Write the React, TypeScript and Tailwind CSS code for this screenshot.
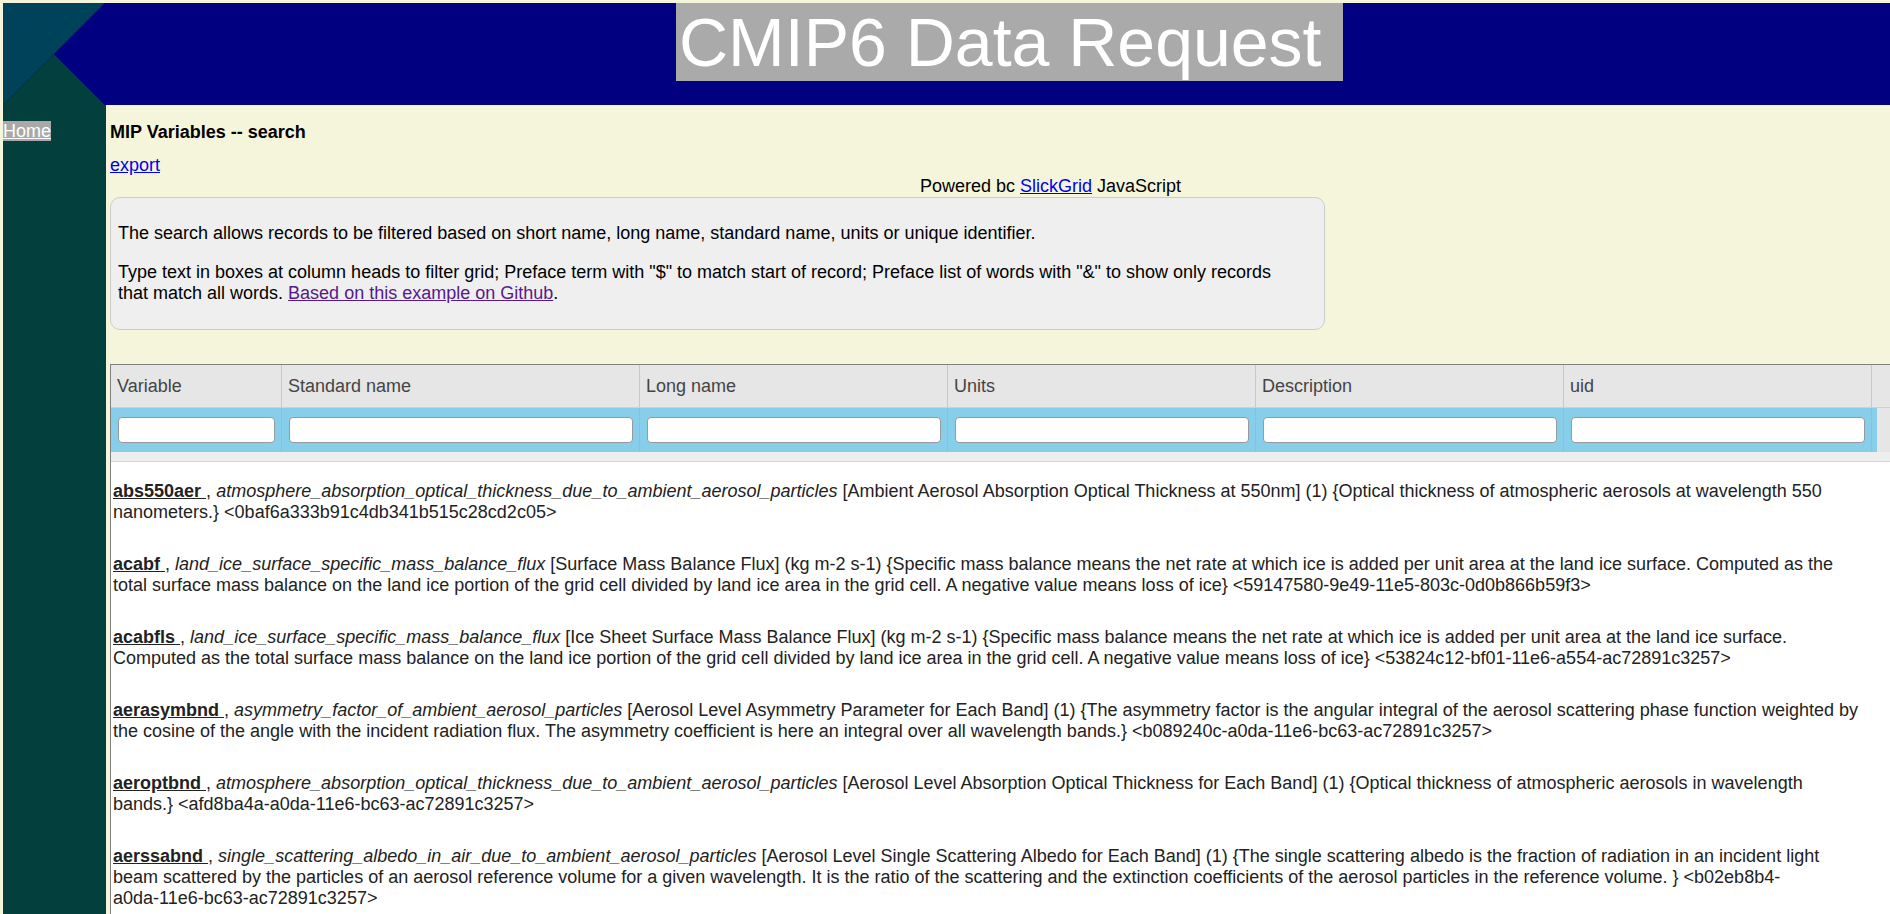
import React from "react";

const columns = [
  { label: "Variable", w: "w-[171px]" },
  { label: "Standard name", w: "w-[358px]" },
  { label: "Long name", w: "w-[308px]" },
  { label: "Units", w: "w-[308px]" },
  { label: "Description", w: "w-[308px]" },
  { label: "uid", w: "w-[308px]" },
];

type Row = {
  name: string;
  std: string;
  long: string;
  units: string;
  desc: string;
  uid: string;
};

const rows: Row[] = [
  {
    name: "abs550aer",
    std: "atmosphere_absorption_optical_thickness_due_to_ambient_aerosol_particles",
    long: "Ambient Aerosol Absorption Optical Thickness at 550nm",
    units: "1",
    desc: "Optical thickness of atmospheric aerosols at wavelength 550 nanometers.",
    uid: "0baf6a333b91c4db341b515c28cd2c05",
  },
  {
    name: "acabf",
    std: "land_ice_surface_specific_mass_balance_flux",
    long: "Surface Mass Balance Flux",
    units: "kg m-2 s-1",
    desc: "Specific mass balance means the net rate at which ice is added per unit area at the land ice surface. Computed as the total surface mass balance on the land ice portion of the grid cell divided by land ice area in the grid cell. A negative value means loss of ice",
    uid: "59147580-9e49-11e5-803c-0d0b866b59f3",
  },
  {
    name: "acabfls",
    std: "land_ice_surface_specific_mass_balance_flux",
    long: "Ice Sheet Surface Mass Balance Flux",
    units: "kg m-2 s-1",
    desc: "Specific mass balance means the net rate at which ice is added per unit area at the land ice surface. Computed as the total surface mass balance on the land ice portion of the grid cell divided by land ice area in the grid cell. A negative value means loss of ice",
    uid: "53824c12-bf01-11e6-a554-ac72891c3257",
  },
  {
    name: "aerasymbnd",
    std: "asymmetry_factor_of_ambient_aerosol_particles",
    long: "Aerosol Level Asymmetry Parameter for Each Band",
    units: "1",
    desc: "The asymmetry factor is the angular integral of the aerosol scattering phase function weighted by the cosine of the angle with the incident radiation flux. The asymmetry coefficient is here an integral over all wavelength bands.",
    uid: "b089240c-a0da-11e6-bc63-ac72891c3257",
  },
  {
    name: "aeroptbnd",
    std: "atmosphere_absorption_optical_thickness_due_to_ambient_aerosol_particles",
    long: "Aerosol Level Absorption Optical Thickness for Each Band",
    units: "1",
    desc: "Optical thickness of atmospheric aerosols in wavelength bands.",
    uid: "afd8ba4a-a0da-11e6-bc63-ac72891c3257",
  },
  {
    name: "aerssabnd",
    std: "single_scattering_albedo_in_air_due_to_ambient_aerosol_particles",
    long: "Aerosol Level Single Scattering Albedo for Each Band",
    units: "1",
    desc: "The single scattering albedo is the fraction of radiation in an incident light beam scattered by the particles of an aerosol reference volume for a given wavelength. It is the ratio of the scattering and the extinction coefficients of the aerosol particles in the reference volume. ",
    uid: "b02eb8b4-a0da-11e6-bc63-ac72891c3257",
  },
];

// no line break after a hyphen that is followed by a digit (a0da-11e6 stays together)
function Uid({ uid }: { uid: string }) {
  const parts = uid.split("-");
  const groups: string[] = [];
  parts.forEach((p, i) => {
    if (i > 0 && /^[0-9]/.test(p)) groups[groups.length - 1] += "-" + p;
    else groups.push(p);
  });
  return (
    <>
      &lt;
      {groups.map((g, i) => (
        <React.Fragment key={i}>
          {i > 0 && "-"}
          <span className="whitespace-nowrap">{g}</span>
        </React.Fragment>
      ))}
      &gt;
    </>
  );
}

function Logo() {
  return (
    <svg width="102" height="102" viewBox="0 0 102 102" className="shrink-0 block">
      <polygon points="0,0 102,0 51,51 0,102" fill="#00425a" />
      <polygon points="0,102 51,51 102,102" fill="#033f3c" />
      <polygon points="102,0 51,51 102,102" fill="#000080" />
    </svg>
  );
}

export default function App() {
  return (
    <div className="min-h-screen bg-[#f5f5dc] pt-[3px] pl-[3px] flex flex-col font-['Liberation_Sans',Arial,sans-serif] text-[18px] leading-[normal] text-black">
      {/* Header */}
      <header className="flex h-[102px] bg-[#000080] shrink-0">
        <Logo />
        <div className="ml-[571px] h-[78px] w-[667px] bg-[#aaaaaa] pl-[3px] text-[68px] leading-[78px] text-white whitespace-nowrap">
          CMIP6 Data Request
        </div>
      </header>

      <div className="flex flex-1">
        {/* Sidebar */}
        <nav className="w-[103px] shrink-0 bg-[#033f3c] pt-[16px]">
          <a href="#" className="bg-[#a9a9a9] text-white underline">Home</a>
        </nav>

        {/* Main */}
        <main className="flex-1 min-w-0 pl-[4px] pt-[17px]">
          <h3 className="font-bold mb-[12px]">MIP Variables -- search</h3>
          <a href="#" className="text-[#0000ee] underline">export</a>
          <div className="pl-[810px]">
            Powered bc <a href="#" className="text-[#0000ee] underline">SlickGrid</a> JavaScript
          </div>

          <div className="w-[1215px] rounded-[10px] border border-[#cccccc] bg-[#efefef] pl-[7px] pr-[28px] py-[7px]">
            <p className="my-[18px]">The search allows records to be filtered based on short name, long name, standard name, units or unique identifier.</p>
            <p className="my-[18px]">
              Type text in boxes at column heads to filter grid; Preface term with "$" to match start of record; Preface list of words with "&amp;" to show only records that match all words.{" "}
              <a href="#" className="text-[#551a8b] underline">Based on this example on Github</a>.
            </p>
          </div>

          {/* Grid */}
          <div className="mt-[34px] border-t border-l border-[#808080] bg-white">
            <div className="flex h-[43px] bg-[#e6e6e6] border-b border-[#d0d0d0]">
              {columns.map((c) => (
                <div key={c.label} className={`${c.w} shrink-0 border-r border-[#c8c8c8] pl-[6px] flex items-center text-[#444]`}>
                  {c.label}
                </div>
              ))}
              <div className="flex-1" />
            </div>
            <div className="flex h-[44px] bg-[#e6e6e6]">
              {columns.map((c) => (
                <div key={c.label} className={`${c.w} shrink-0 bg-[#87ceeb] border-r border-[#80c4e0] pl-[7px] pr-[6px] flex items-center`}>
                  <input className="h-[26px] w-full rounded-[4px] border border-[#999999] bg-white" />
                </div>
              ))}
              <div className="w-[5px] shrink-0 bg-[#87ceeb]" />
              <div className="flex-1" />
            </div>
            <div className="h-[10px] bg-[#eeeeee] border-b border-[#d6d6d6]" />

            <div className="text-[#222] pb-[10px]">
              {rows.map((r) => (
                <div key={r.name} className="min-h-[73px] pt-[19px] pl-[2px] pr-[24px]">
                  <a href="#" className="font-bold underline text-[#222]">{r.name} </a>,{" "}
                  <i>{r.std}</i> [{r.long}] ({r.units}) {"{"}{r.desc}{"}"} <Uid uid={r.uid} />
                </div>
              ))}
            </div>
          </div>
        </main>
      </div>
    </div>
  );
}
